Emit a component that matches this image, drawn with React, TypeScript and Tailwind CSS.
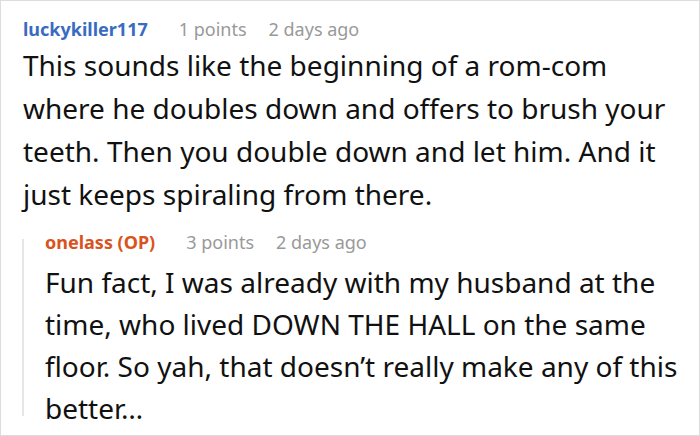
import React from "react";

type Comment = {
    author: string;
    points: string;
    time: string;
    body: string;
};

const comment: Comment = {
    author: "luckykiller117",
    points: "1 points",
    time: "2 days ago",
    body: "This sounds like the beginning of a rom-com where he doubles down and offers to brush your teeth. Then you double down and let him. And it just keeps spiraling from there.",
};

const reply: Comment = {
    author: "onelass (OP)",
    points: "3 points",
    time: "2 days ago",
    body: "Fun fact, I was already with my husband at the time, who lived DOWN THE HALL on the same floor. So yah, that doesn\u2019t really make any of this better\u2026",
};

function Meta({ c, nameColor }: { c: Comment; nameColor: string }) {
    return (
        <div className="flex items-baseline text-[18px] leading-[22px]">
            <span className={`font-bold ${nameColor}`}>{c.author}</span>
            <span className="ml-[31px] text-[#999999]">{c.points}</span>
            <span className="ml-[22px] text-[#999999]">{c.time}</span>
        </div>
    );
}

export default function App() {
    return (
        <div
            className="w-[700px] h-[436px] bg-white border border-[#dddddd] overflow-hidden text-[#111111]"
            style={{ fontFamily: '"Noto Sans", "Open Sans", sans-serif' }}
        >
            <div className="pl-[22px] pt-[17px] pr-[14px]">
                <Meta c={comment} nameColor="text-[#3a6bc2]" />
                <p className="mt-[4px] text-[28px] leading-[43px]">{comment.body}</p>
            </div>

            <div className="flex pl-[21px] mt-[15px]">
                <div className="mt-[8px] w-[2px] h-[177px] shrink-0 bg-[#e6e6e6]" />
                <div className="pl-[21px] pr-[8px]">
                    <Meta c={reply} nameColor="text-[#d9531e]" />
                    <p className="mt-[8px] text-[28px] leading-[42px]">{reply.body}</p>
                </div>
            </div>
        </div>
    );
}
